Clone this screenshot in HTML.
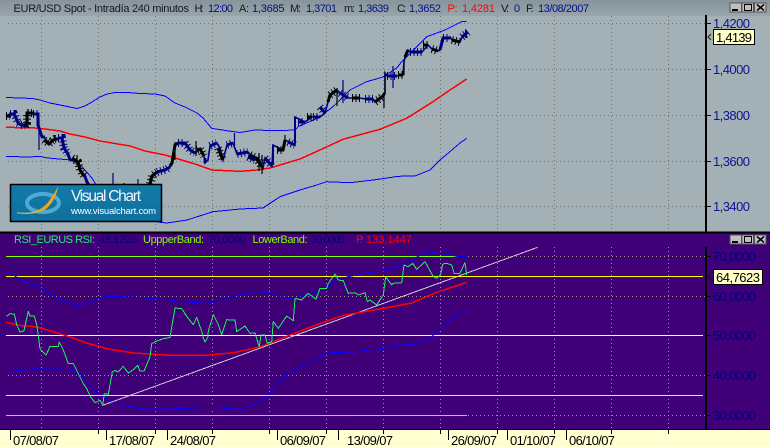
<!DOCTYPE html>
<html><head><meta charset="utf-8"><style>
html,body{margin:0;padding:0;background:#a3b1b7}
svg{display:block}
text{font-family:"Liberation Sans",Arial,sans-serif}
.t text{font-size:11px}
.ax text{font-size:13px}
.crisp polyline{shape-rendering:crispEdges}
</style></head><body>
<svg width="770" height="447" viewBox="0 0 770 447" xmlns="http://www.w3.org/2000/svg">
<defs>
<linearGradient id="tb" x1="0" y1="0" x2="0" y2="1"><stop offset="0" stop-color="#87949a"/><stop offset="1" stop-color="#98a5aa"/></linearGradient>
<linearGradient id="lg" x1="0" y1="0" x2="0" y2="1"><stop offset="0" stop-color="#127ba8"/><stop offset="1" stop-color="#0f6f9c"/></linearGradient>
</defs>
<rect width="770" height="447" fill="#a3b1b7"/>
<rect width="770" height="16" fill="url(#tb)"/>
<rect x="0" y="233" width="770" height="197" fill="#400078"/>
<rect x="0" y="430" width="770" height="17" fill="#ffffd2"/>

<!-- upper grid -->
<g stroke="#6d777b" stroke-dasharray="1 3" fill="none" shape-rendering="crispEdges">
<path d="M8 23.5H706M8 69.5H706M8 115.5H706M8 161.5H706M8 206.5H706"/>
<path d="M41.5 16V231M98.5 16V231M155.5 16V231M212.5 16V231M269.5 16V231M326.5 16V231M383.5 16V231M440.5 16V231M497.5 16V231M554.5 16V231M611.5 16V231M668.5 16V231"/>
</g>
<!-- lower grid -->
<g fill="none" stroke-dasharray="1 3" shape-rendering="crispEdges">
<path stroke="#a89a90" d="M8 296.5H706M8 375.5H706M8 256.5H706M8 415.5H706"/>
<path stroke="#a09a78" d="M41.5 247V429M98.5 247V429M155.5 247V429M212.5 247V429M269.5 247V429M326.5 247V429M383.5 247V429M440.5 247V429M497.5 247V429M554.5 247V429M611.5 247V429M668.5 247V429"/>
</g>

<!-- upper indicators -->
<g fill="none" stroke-linejoin="round" class="crisp">
<polyline stroke="#0000ff" stroke-width="1" points="6,97.5 33,98.5 40,100 50,103 60,105 70,107 77,108.5 85,106 92,102 100,97 107,94 115,92.5 128,92.5 140,93.5 155,94 165,96 175,103 185,107 197,113 203,118 211.7,128.3 226.7,130.7 240,132.5 255,130 276.7,130.7 295,130 298,126.7 318,118 333,106.7 350,90 366.7,81.7 383,77 396.7,68 401.7,61.7 426.7,36.7 445,30 461.7,21.7 466.7,21.3"/>
<polyline stroke="#ff0000" stroke-width="1.5" points="6,127.3 35,128 45,129 60,131 70,134 85,137 100,141 130,146 145,151 165,155 175,158 195,164 212,170 240,171.3 256.7,170 270,168 300,159 320,150 343,139.3 380,129.3 406.7,118.3 433,101.7 450,90 466.7,79"/>
<polyline stroke="#0000ff" stroke-width="1" points="6,156.3 26,157 40,156.5 48,158 70,160 76.7,161.7 83,168 92,178 100,192"/>
<polyline stroke="#0000ff" stroke-width="1" points="157,222 167,223 187,220 213,211.7 240,209 263,208 280,196.7 300,190 316.7,185 326.7,181.7 350,182.7 373,180 385,178.3 398,176.3 415,176 430,170 440,160 448,153.3 460,143 466.7,138.3"/>
</g>

<!-- candles -->
<polyline fill="none" stroke="#00007f" stroke-width="1.6" points="6,116 10,114 14,114 16,118 18,123 21,125 25,127 27,123 28,113 33,114 38,114 38,125 42,137 45,138 49,144 52,141 55,139 62,138 64,148 68,154 70,160 78,162 80,170 84,176 87,182 90,187 95,200"/>
<polyline fill="none" stroke="#00007f" stroke-width="1.6" points="150,200 150,184 152,176 157,172 165,170 170,167 172,163 175,145 178,143 185,144 190,150 195,153 200,149 204,156 205,163 208,160 210,146 217,143 220,148 223,160 227,145 233,143 237,154 248,152 255,160 258,158 263,168 265,158 272,166 273,145 283,150 285,140 295,145 295,117 305,122 312,117 320,117 325,113 328,102 330,95 337,90 340,93 348,98 352,98 360,98 365,99 373,99 375,102 383,96 385,93 385,73 387,76 397,76 403,75 404,62 405,57 408,50 410,52 422,52 428,45 432,49 438,51 440,50 443,38 450,37 452,40 460,42 462,37 468,32"/>
<g fill="none" stroke-linejoin="miter" stroke-width="3">
<path stroke="#000000" d="M6 116H10M25 126L27 123V113H33M44 140L49 144L52 141L55 139H58M72 158L78 162L80 170L84 176M150 184L152 176L157 172M170 166L172 163L175 145L178 143M197 150L200 149L204 156M218 148L223 160M250 155L256 158L262 167M277 150H283L285 140M307 117H312M328 102L330 95L337 90M352 98H360M375 102L383 96L384.5 93M398 75H403M405 57L408 50M423 45H428M432 49L438 51M452 40L460 42"/>
<path stroke="#00007f" d="M10 114H14L16 118L18 123L21 125H25M33 114H38V125L42 137H45M58 138H62L64 148L68 154L70 160M84 174L87 182L90 187M157 172L165 170L170 167M178 143H185L190 150L195 153M205 158V163M210 146L217 143M227 145L233 143M237 154L248 152M248 157L255 160M265 158L272 166M288 142L295 145M298 122H305M313 117H320M320 107L325 113M340 93L348 98M365 99H373M387 76H397M410 52H422M440 50L443 38H450M462 37L468 32"/>
</g>
<g fill="none" stroke-width="8" stroke-dasharray="1 2.5">
<path stroke="#000000" d="M6 116H10M25 126L27 123V113H33M44 140L49 144L52 141L55 139H58M72 158L78 162L80 170L84 176M150 184L152 176L157 172M197 150L200 149L204 156M218 148L223 160M250 155L256 158L262 167M277 150H283M307 117H312M330 95L337 90M352 98H360M375 102L383 96M398 75H403M423 45H428M432 49L438 51M452 40L460 42"/>
<path stroke="#00007f" d="M10 114H14L16 118L18 123L21 125H25M33 114H38M58 138H62L64 148L68 154M157 172L165 170L170 167M178 143H185L190 150L195 153M210 146L217 143M227 145L233 143M237 154L248 152M248 157L255 160M265 158L272 166M288 142L295 145M298 122H305M313 117H320M320 107L325 113M340 93L348 98M365 99H373M387 76H397M410 52H422M443 38H450M462 37L468 32"/>
</g>
<g fill="none" stroke-width="1.2">
<path stroke="#000000" d="M385 73V93M404 62V75M28 109V128M77 155V165M124 183V187M150 178V186M175 142V160M196 141V156M259 153V171M262 155V174M285 135V146M337 88V106M384 93V108"/>
<path stroke="#00007f" d="M113 173V186M138 179V186M234.5 133V146M39 118V150M343 80V103M393 66V88"/>
<path stroke="#00007f" stroke-width="2" d="M273 145V165M295 117V142M466 30V38"/>
</g>

<!-- logo -->
<rect x="10.5" y="184.5" width="151" height="37" fill="url(#lg)" stroke="#000" stroke-width="1.5"/>
<ellipse cx="43" cy="203" rx="16" ry="9" fill="none" stroke="#5fb8e0" stroke-width="4" opacity=".8"/>
<path d="M17 213C30 214 42 211 49 201C53 195 56 191 58 186C57 195 53 203 46 209C38 214 27 215 17 213Z" fill="#e8a820"/>
<path d="M17 213C24 213 30 214 36 212" stroke="#a8c890" stroke-width="1" fill="none"/>
<text x="71" y="201" font-size="15.5" fill="#eef6fa" textLength="70">Visual Chart</text>
<text x="71" y="214" font-size="9.5" fill="#ffffff" textLength="85">www.visualchart.com</text>

<!-- lower indicators -->
<g fill="none" stroke-linejoin="round" class="crisp">
<path stroke="#ffffff" stroke-width="1.3" d="M6 335.5H703" shape-rendering="crispEdges"/>
<polyline stroke="#0000ff" stroke-width="1" points="6.7,372 33.3,368.7 66.7,369.3 78.3,372 90,385.3 100,395.3 113.3,402.7 143.3,409 166.7,409 213.3,407.3 236.7,409.3 253.3,405.3 268.3,395.3 285,375.3 316.7,358.7 325,353 353.3,352 385,348 401.7,345.3 418.3,343.7 431.7,337 433.3,335.3 445,323 466.7,309.7"/>
<polyline stroke="#d0c8d4" stroke-width="1" points="102.7,405.3 537.7,247.3"/>
<polyline stroke="#ff0000" stroke-width="1.5" points="6,322.3 20,325.3 36.7,327 63.3,334.7 70,337 86.7,343 106.7,348.7 133.3,353 170,355.3 206.7,355.3 233.3,352.7 260,347 286.7,336.3 316.7,324.7 343.3,315.3 366.7,311.3 385,308 411.7,303 435,293 466.7,282.3"/>
<path stroke="#80ff00" stroke-width="1.3" d="M6 256.5H458M6 415.5H467" shape-rendering="crispEdges"/>
<path stroke="#ffff00" stroke-width="1.3" d="M6 276.5H703M6 395.5H703" shape-rendering="crispEdges"/>
<polyline stroke="#0000ff" stroke-width="1" points="6.7,272 13.3,274.7 20,279.7 40,287.3 53.3,296.3 77.7,306.7 103.3,296.3 133,297 166.7,299.7 186.7,302 206.7,303.3 233,296.3 256.7,291.3 270,293 283.3,298 296.7,298 316.7,292 333.3,283 346.7,277 366.7,273 385,270.7 406.7,263 418.3,256.3 428.3,252 445,254 456.7,256.3 466.7,256.3"/>
<polyline stroke="#20f060" stroke-width="1" points="6.7,316.3 10,313.7 14.3,314 16.7,324.7 20,332 24,330.7 28.3,311.3 30,316 34.3,316 36.7,324.7 38.5,337 40,348.7 46,355.3 50,346.3 58.3,346.3 59.3,342 63.3,350 68.3,363.7 73.3,363.7 78.3,373.7 83.3,383.7 86.7,388.7 90.7,397 95,402.7 100,400.3 102.7,405.3 104.3,393.7 108.3,394.3 112.3,372 115,370.3 118.3,372 123.3,366.3 128.3,373 133.3,369.7 137.7,365.3 140,371 144,371 150,357 151.7,343.7 156.7,341 163.3,338.7 170,337.5 175,308 181.7,308.7 186.7,316.3 193.3,324.7 196.7,317.3 201.7,331.3 203.3,338 205,342 208,337 208.3,331.3 213.3,314.7 218.3,324.7 221.7,334.7 226.7,319.7 235,320 236.7,331.7 245,326 250,333.3 255,333 259.3,346.7 261,335 265,335 267.3,343.3 271.7,341.7 273.3,321.7 278.3,328.3 286.7,316 293.3,320.7 295,298.3 301.7,300 308.3,293.3 316,299.3 320,288.3 326.7,288.3 328.3,283.3 335,274 338.3,280 343.3,280.7 348.3,293.3 355,292.7 358.3,295 365,292.7 367.3,301.7 370,300 376.7,305 383.3,295 385.7,276.7 391.7,285 393.3,283.3 401.7,282.7 404,265 408.3,266.7 412.7,263.3 416.7,269.3 425,261.7 433.3,276.7 436.7,278.3 440.7,274 442.7,264 446.7,263.3 451.7,265 454,273.3 460,273.3 465,262.7 466.7,275"/>
</g>

<!-- axes -->
<g stroke="#000" fill="none" shape-rendering="crispEdges">
<path stroke-width="2" d="M706 15V232M706 247V430"/>
<path stroke-width="2" d="M0 232.5H770"/>
<path d="M0 429.5H770"/>
<path d="M706 23.5H711M706 69.5H711M706 115.5H711M706 161.5H711M706 206.5H711M706 256.5H711M706 296.5H711M706 335.5H711M706 375.5H711M706 415.5H711"/>
<path d="M10.5 430V440M106.5 430V440M167.5 430V440M277.5 430V440M338.5 430V440M448.5 430V440M507.5 430V440M566.5 430V440"/>
<path d="M98.5 430V434M155.5 430V434M212.5 430V434M269.5 430V434M326.5 430V434M383.5 430V434M440.5 430V434M497.5 430V434M554.5 430V434M611.5 430V434M668.5 430V434"/>
</g>

<!-- title text -->
<g class="t">
<text x="13.5" y="12" fill="#101820" textLength="175.5">EUR/USD Spot - Intradía 240 minutos</text>
<text x="194.5" y="12" fill="#101820" textLength="9">H:</text>
<text x="208" y="12" fill="#00108a" textLength="25">12:00</text>
<text x="239" y="12" fill="#101820" textLength="10">A:</text>
<text x="252" y="12" fill="#00108a" textLength="32.5">1,3685</text>
<text x="290" y="12" fill="#101820" textLength="11">M:</text>
<text x="306" y="12" fill="#00108a" textLength="31">1,3701</text>
<text x="344" y="12" fill="#101820" textLength="11">m:</text>
<text x="358" y="12" fill="#00108a" textLength="31">1,3639</text>
<text x="397" y="12" fill="#101820" textLength="9">C:</text>
<text x="409" y="12" fill="#00108a" textLength="32">1,3652</text>
<text x="447.5" y="12" fill="#ff0000" textLength="10">P :</text>
<text x="462" y="12" fill="#ff0000" textLength="33">1,4281</text>
<text x="501" y="12" fill="#101820" textLength="8">V:</text>
<text x="514" y="12" fill="#00108a" textLength="5.5">0</text>
<text x="526" y="12" fill="#101820" textLength="7.5">F:</text>
<text x="538" y="12" fill="#00108a" textLength="51">13/08/2007</text>

<text x="14" y="243" fill="#20f060" textLength="81">RSI_EURUS RSI:</text>
<text x="99" y="243" fill="#000080" textLength="38">45,1220</text>
<text x="143" y="243" fill="#80ff00" textLength="61">UppperBand:</text>
<text x="208" y="243" fill="#000080" textLength="38">70,0000</text>
<text x="252.5" y="243" fill="#80ff00" textLength="55">LowerBand:</text>
<text x="311" y="243" fill="#000080" textLength="34">30,0000</text>
<text x="356" y="243" fill="#ff0000" textLength="7">P:</text>
<text x="366" y="243" fill="#ff0000" textLength="46">133,1447</text>
</g>

<!-- axis labels -->
<g class="ax">
<g fill="#0e1490">
<text x="713" y="28" textLength="37">1,4200</text>
<text x="713" y="74" textLength="37">1,4000</text>
<text x="713" y="120" textLength="37">1,3800</text>
<text x="713" y="166" textLength="37">1,3600</text>
<text x="713" y="211" textLength="37">1,3400</text>
</g>
<g fill="#00007f">
<text x="713" y="261" textLength="43">70,0000</text>
<text x="713" y="301" textLength="43">60,0000</text>
<text x="713" y="340" textLength="43">50,0000</text>
<text x="713" y="380" textLength="43">40,0000</text>
<text x="713" y="420" textLength="43">30,0000</text>
</g>
<g fill="#000">
<text x="13" y="445" textLength="46">07/08/07</text>
<text x="109" y="445" textLength="46">17/08/07</text>
<text x="170" y="445" textLength="46">24/08/07</text>
<text x="280" y="445" textLength="46">06/09/07</text>
<text x="347" y="445" textLength="46">13/09/07</text>
<text x="451" y="445" textLength="46">26/09/07</text>
<text x="510" y="445" textLength="46">01/10/07</text>
<text x="569" y="445" textLength="46">06/10/07</text>
</g>
<rect x="713.5" y="29.5" width="41" height="15" fill="#ffffc8" stroke="#000"/>
<text x="716" y="42" fill="#000" textLength="36">1,4139</text>
<path d="M711 34L708 37L711 40" fill="none" stroke="#222"/>
<rect x="713.5" y="269.5" width="49" height="15" fill="#ffffc8" stroke="#000"/>
<text x="716" y="282" fill="#000" textLength="44">64,7623</text>
<path d="M711 274L708 277L711 280" fill="none" stroke="#111"/>
</g>

<!-- window buttons -->
<g shape-rendering="crispEdges">
<rect x="730" y="3" width="11.5" height="9" fill="#c0c0c0" stroke="#555"/>
<rect x="742" y="3" width="11.5" height="9" fill="#c0c0c0" stroke="#555"/>
<rect x="754.5" y="3" width="11.5" height="9" fill="#c0c0c0" stroke="#555"/>
<path d="M732 10H738" stroke="#000" stroke-width="2"/>
<rect x="744.5" y="4.5" width="7" height="6" fill="none" stroke="#000"/>
<path d="M757 4.5L764 10.5M764 4.5L757 10.5" stroke="#000" stroke-width="1.5" shape-rendering="auto"/>
<rect x="730" y="235" width="11.5" height="9" fill="#c0c0c0" stroke="#555"/>
<rect x="742" y="235" width="11.5" height="9" fill="#c0c0c0" stroke="#555"/>
<rect x="754.5" y="235" width="11.5" height="9" fill="#c0c0c0" stroke="#555"/>
<path d="M732 242H738" stroke="#000" stroke-width="2"/>
<rect x="744.5" y="236.5" width="7" height="6" fill="none" stroke="#000"/>
<path d="M757 236.5L764 242.5M764 236.5L757 242.5" stroke="#000" stroke-width="1.5" shape-rendering="auto"/>
</g>
</svg>
</body></html>
